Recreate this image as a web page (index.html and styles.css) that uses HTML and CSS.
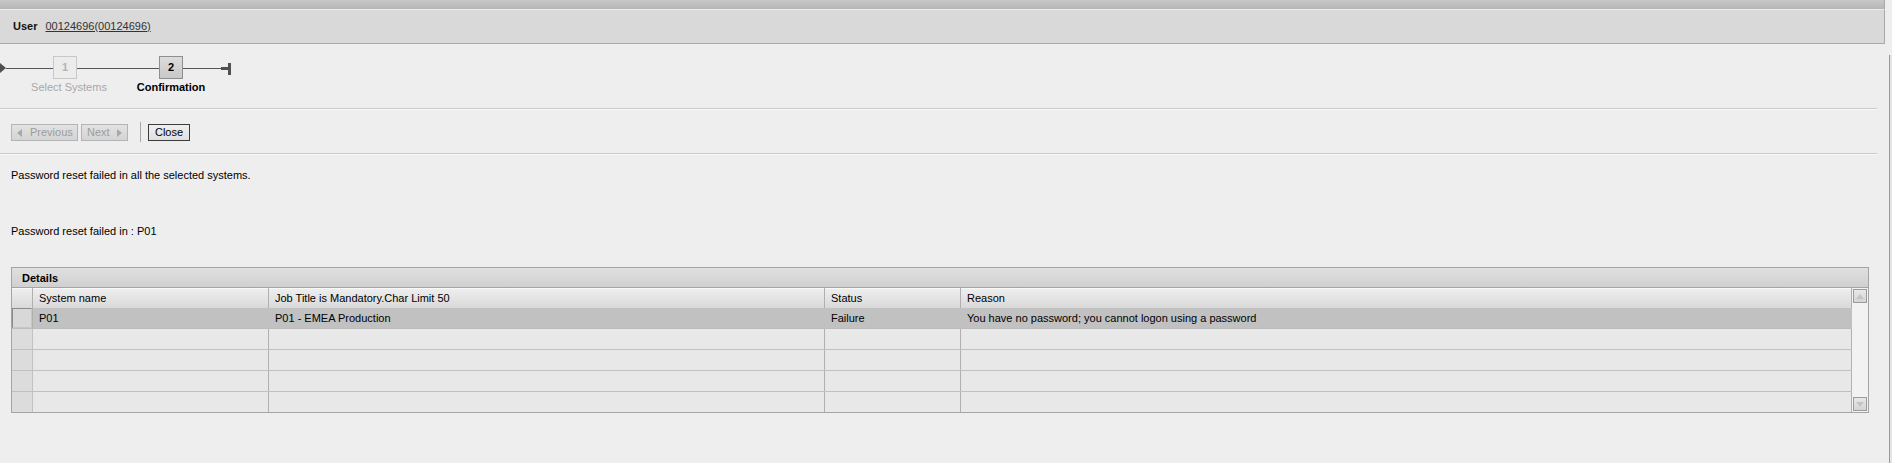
FILE: index.html
```html
<!DOCTYPE html>
<html>
<head>
<meta charset="utf-8">
<title>Password reset</title>
<link rel="stylesheet" href="styles.css">
</head>
<body>
<div class="page">
  <div class="main">
    <div class="topbar"></div>
    <div class="userbar">
      <span class="ulabel">User</span>
      <a class="ulink" href="#">00124696(00124696)</a>
    </div>

    <div class="stepper">
      <div class="track">
        <svg class="start" width="6" height="10" viewBox="0 0 6 10"><polygon points="0,0 6,5 0,10" fill="#505050"/></svg>
        <span class="line l1"></span>
        <div class="step done"><span class="box">1</span><span class="label">Select Systems</span></div>
        <span class="line l2"></span>
        <div class="step current"><span class="box">2</span><span class="label">Confirmation</span></div>
        <span class="line l3"></span>
        <svg class="end" width="11" height="12" viewBox="0 0 11 12"><rect x="0" y="4" width="7" height="3" fill="#505050"/><rect x="7" y="0" width="3" height="12" fill="#505050"/></svg>
      </div>
    </div>

    <div class="toolbar">
      <button class="btn btn-prev" disabled>
        <svg width="5" height="8" viewBox="0 0 5 8"><polygon points="5,0 0,4 5,8" fill="#a8a8a8"/></svg>
        <span>Previous</span>
      </button>
      <button class="btn btn-next" disabled>
        <span>Next</span>
        <svg width="5" height="8" viewBox="0 0 5 8"><polygon points="0,0 5,4 0,8" fill="#a8a8a8"/></svg>
      </button>
      <span class="tsep"></span>
      <button class="btn btn-close">Close</button>
    </div>

    <div class="content">
      <p class="msg msg1">Password reset failed in all the selected systems.</p>
      <p class="msg msg2">Password reset failed in : P01</p>

      <div class="details">
        <div class="details-title">Details</div>
        <div class="details-body">
          <div class="grid">
            <div class="row head">
              <div class="cell sel"></div>
              <div class="cell">System name</div>
              <div class="cell">Job Title is Mandatory.Char Limit 50</div>
              <div class="cell">Status</div>
              <div class="cell">Reason</div>
            </div>
            <div class="row selected">
              <div class="cell sel"><span class="selbox"></span></div>
              <div class="cell">P01</div>
              <div class="cell">P01 - EMEA Production</div>
              <div class="cell">Failure</div>
              <div class="cell">You have no password; you cannot logon using a password</div>
            </div>
            <div class="row empty">
              <div class="cell sel"></div><div class="cell"></div><div class="cell"></div><div class="cell"></div><div class="cell"></div>
            </div>
            <div class="row empty">
              <div class="cell sel"></div><div class="cell"></div><div class="cell"></div><div class="cell"></div><div class="cell"></div>
            </div>
            <div class="row empty">
              <div class="cell sel"></div><div class="cell"></div><div class="cell"></div><div class="cell"></div><div class="cell"></div>
            </div>
            <div class="row empty last">
              <div class="cell sel"></div><div class="cell"></div><div class="cell"></div><div class="cell"></div><div class="cell"></div>
            </div>
          </div>
          <div class="vscroll">
            <span class="sbtn">
              <svg width="8" height="5" viewBox="0 0 8 5"><polygon points="0,5 4,0 8,5" fill="#c4c4c4"/></svg>
            </span>
            <span class="sbtn">
              <svg width="8" height="5" viewBox="0 0 8 5"><polygon points="0,0 4,5 8,0" fill="#c4c4c4"/></svg>
            </span>
          </div>
        </div>
      </div>
    </div>
  </div>
  <div class="edge"><div class="edge-line"></div></div>
</div>
</body>
</html>
```

FILE: styles.css
```css
* {
  box-sizing: border-box;
}

html, body {
  margin: 0;
  padding: 0;
  background: #eeeeee;
  height: 463px;
  overflow: hidden;
}

body {
  font-family: "Liberation Sans", Arial, sans-serif;
  font-size: 11px;
  color: #000;
}

.page {
  display: flex;
  width: 1892px;
}

.main {
  width: 1885px;
}

.topbar {
  height: 9px;
  background: linear-gradient(#c8c8c8, #b6b6b6);
  border-right: 1px solid #a8a8a8;
}

.userbar {
  height: 35px;
  border-top: 1px solid #ececec;
  border-bottom: 1px solid #a9a9a9;
  border-right: 1px solid #a9a9a9;
  background: #d9d9d9;
  display: flex;
  align-items: center;
  padding-left: 13px;
  gap: 8px;
  line-height: 13px;
}

.ulabel {
  font-weight: bold;
  color: #111;
}

.ulink {
  color: #333;
  text-decoration: underline;
}

/* Stepper */
.stepper {
  height: 65px;
  margin-right: 8px;
  border-bottom: 1px solid #cbcbcb;
  box-shadow: 0 1px 0 #f8f8f8;
}

.track {
  display: flex;
  align-items: flex-start;
  padding-top: 12px;
}

.start {
  margin-top: 7px;
  display: block;
}

.line {
  height: 1px;
  background: #555;
  margin-top: 12px;
}

.l1 { width: 47px; }
.l2 { width: 82px; }
.l3 { width: 38px; }

.end {
  display: block;
  margin-top: 7px;
}

.step {
  width: 24px;
  display: flex;
  flex-direction: column;
  align-items: center;
}

.box {
  width: 24px;
  height: 23px;
  border: 1px solid #c8c8c8;
  display: flex;
  align-items: center;
  justify-content: center;
  font-weight: bold;
  line-height: 13px;
}

.label {
  margin-top: 2px;
  line-height: 13px;
  white-space: nowrap;
}

.step.done .box {
  background: #ececec;
  color: #b4b4b4;
}

.step.done .label {
  color: #a8a8a8;
  margin-left: 8px;
}

.step.current .box {
  background: linear-gradient(#dcdcdc, #c8c8c8);
  border-color: #8e8e8e;
  color: #000;
}

.step.current .label {
  font-weight: bold;
  color: #000;
}

/* Toolbar */
.toolbar {
  height: 45px;
  margin-right: 8px;
  padding: 15px 0 0 11px;
  display: flex;
  align-items: flex-start;
  border-bottom: 1px solid #cbcbcb;
  box-shadow: 0 1px 0 #f8f8f8;
}

.btn {
  height: 17px;
  font-family: "Liberation Sans", Arial, sans-serif;
  font-size: 11px;
  line-height: 13px;
  padding: 0;
  margin: 0;
  display: flex;
  align-items: center;
  border: 1px solid #b4b4b4;
  background: linear-gradient(#e2e2e2, #d4d4d4);
  color: #9c9c9c;
}

.btn-prev {
  width: 67px;
  padding-left: 5px;
  gap: 8px;
}

.btn-prev svg { margin-top: 1px; }

.btn-next {
  width: 47px;
  margin-left: 3px;
  padding-left: 5px;
  gap: 7px;
}

.btn-next svg { margin-top: 1px; }

.tsep {
  width: 1px;
  height: 20px;
  margin-top: -2px;
  margin-left: 12px;
  background: #a8a8a8;
}

.btn-close {
  width: 42px;
  margin-left: 7px;
  justify-content: center;
  color: #000;
  border-color: #3c3c3c;
  background: linear-gradient(#efefef, #e0e0e0);
}

/* Content */
.content {
  padding-left: 11px;
}

.msg {
  margin: 0;
  line-height: 14px;
}

.msg1 {
  padding-top: 14px;
}

.msg2 {
  margin-top: 42px;
}

.details {
  margin-top: 29px;
  width: 1858px;
  border: 1px solid #a4a4a4;
}

.details-title {
  height: 20px;
  padding-left: 10px;
  display: flex;
  align-items: center;
  font-weight: bold;
  background: linear-gradient(#e0e0e0, #d0d0d0);
  border-bottom: 1px solid #a4a4a4;
}

.details-body {
  display: flex;
}

.grid {
  width: 1840px;
}

.row {
  display: grid;
  grid-template-columns: 21px 236px 556px 136px 891px;
  height: 21px;
}

.cell {
  border-right: 1px solid #b0b0b0;
  padding-left: 6px;
  display: flex;
  align-items: center;
  white-space: nowrap;
  overflow: hidden;
}

.cell.sel {
  padding: 0;
}

.row.head {
  height: 20px;
  background: linear-gradient(#efefef, #d9d9d9);
  box-shadow: inset 0 1px 0 #f8f8f8;
}

.row.selected {
  background: #c1c1c1;
  border-bottom: 1px solid #bcbcbc;
}

.row.selected .cell {
  border-right-color: #c1c1c1;
}

.row.selected .cell.sel {
  border-right-color: #b0b0b0;
  background: #dadada;
}

.selbox {
  width: 20px;
  height: 20px;
  border: 1px solid #8a8a8a;
  border-right-color: #c6c6c6;
  border-bottom-color: #c6c6c6;
  background: #d8d8d8;
}

.row.empty {
  background: #e8e8e8;
  border-bottom: 1px solid #c0c0c0;
}

.row.empty.last {
  height: 20px;
  border-bottom: none;
}

.row.empty .cell.sel {
  background: #dcdcdc;
  border-right-color: #c2c2c2;
}

.vscroll {
  width: 16px;
  background: #f2f2f2;
  display: flex;
  flex-direction: column;
  justify-content: space-between;
  padding: 1px 1px 1px 1px;
}

.sbtn {
  width: 14px;
  height: 14px;
  border: 1px solid #9c9c9c;
  background: linear-gradient(#e8e8e8, #d4d4d4);
  display: flex;
  align-items: center;
  justify-content: center;
}

/* right edge */
.edge {
  width: 7px;
  padding-left: 4px;
}

.edge-line {
  margin-top: 55px;
  height: 408px;
  width: 3px;
  border-left: 1px solid #9a9a9a;
  background: #e4e4e4;
}
```
